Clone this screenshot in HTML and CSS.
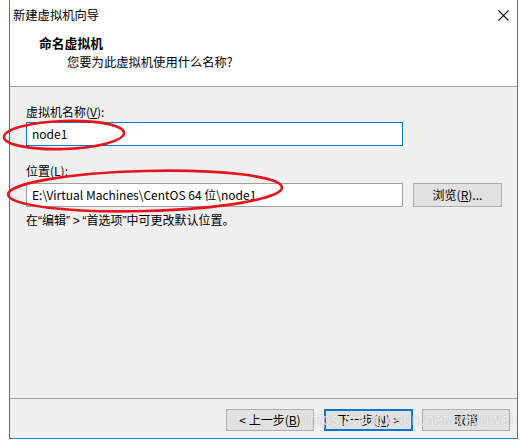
FILE: index.html
```html
<!DOCTYPE html>
<html lang="zh-CN">
<head>
<meta charset="utf-8">
<title>新建虚拟机向导</title>
<link rel="stylesheet" href="styles.css">
</head>
<body>
<div class="page">
  <div class="window">
    <div class="header">
      <div class="titlebar">
        <span class="title">新建虚拟机向导</span>
        <svg class="close" width="11" height="11" viewBox="0 0 11 11"><path d="M0.5 0.5 L10.5 10.5 M10.5 0.5 L0.5 10.5" stroke="#111" stroke-width="1.1" fill="none"/></svg>
      </div>
      <div class="heading">命名虚拟机</div>
      <div class="subheading">您要为此虚拟机使用什么名称?</div>
    </div>
    <div class="content">
      <div class="label label-name">虚拟机名称(<u>V</u>):</div>
      <div class="textbox focused">node1</div>
      <div class="label label-loc">位置(<u>L</u>):</div>
      <div class="row">
        <div class="textbox">E:\Virtual Machines\CentOS 64 位\node1</div>
        <div class="button browse">浏览(<u>R</u>)...</div>
      </div>
      <div class="note">在<span class="q">“</span>编辑<span class="q">”</span> <span class="q">&gt;</span> <span class="q">“</span>首选项<span class="q">”</span>中可更改默认位置。</div>
    </div>
    <div class="footer">
      <div class="button">&lt; 上一步(<u>B</u>)</div>
      <div class="button default">下一步(<u>N</u>) &gt;</div>
      <div class="button cancel">取消</div>
    </div>
  </div>
  <div class="watermark">https://blog.csdn.net/shiyuwei</div>
  <svg class="marks" width="522" height="441" viewBox="0 0 522 441">
    <ellipse cx="64" cy="135" rx="60" ry="14" transform="rotate(-2 64 135)" fill="none" stroke="#e8141c" stroke-width="2.6"/>
    <ellipse cx="145" cy="191" rx="137" ry="20" transform="rotate(-1.5 145 191)" fill="none" stroke="#e8141c" stroke-width="2.6"/>
  </svg>
</div>
</body>
</html>
```
FILE: styles.css
```css
html, body {
  margin: 0;
  padding: 0;
  background: #fff;
}
.page {
  position: relative;
  width: 522px;
  height: 441px;
  overflow: hidden;
  font-family: "Noto Sans CJK SC", "Microsoft YaHei", sans-serif;
  font-size: 12px;
  color: #000;
}
.window {
  margin-left: 9px;
  width: 507px;
  height: 438px;
  border: 1px solid #1883d7;
  border-top: 0;
  background: #f0f0f0;
  display: flex;
  flex-direction: column;
}
.header {
  background: #fff;
  height: 86px;
  border-bottom: 1px solid #a0a0a0;
}
.titlebar {
  height: 30px;
  display: flex;
  align-items: center;
  justify-content: space-between;
  padding-left: 3px;
  padding-right: 8px;
}
.title {
  line-height: 16px;
  font-size: 12.3px;
}
.close {
  display: block;
}
.heading {
  margin-top: 5px;
  padding-left: 29px;
  font-weight: bold;
  font-size: 12.8px;
  line-height: 16px;
}
.subheading {
  margin-top: 3px;
  padding-left: 57px;
  line-height: 16px;
  font-size: 12.3px;
}
.content {
  flex: 1;
  padding: 17px 0 0 16px;
}
.label {
  line-height: 16px;
}
.label-name {
  margin-bottom: 2px;
}
.label-loc {
  margin-top: 17px;
  margin-bottom: 4px;
}
.textbox {
  box-sizing: border-box;
  width: 377px;
  height: 24px;
  border: 1px solid #a0a0a0;
  background: #fff;
  padding-left: 5px;
  line-height: 22px;
  white-space: nowrap;
}
.textbox.focused {
  border-color: #0078d7;
}
.row {
  display: flex;
  gap: 10px;
}
.button {
  box-sizing: border-box;
  width: 88px;
  height: 22px;
  border: 1px solid #adadad;
  background: #e1e1e1;
  display: flex;
  align-items: center;
  justify-content: center;
  line-height: 16px;
}
.browse {
  width: 89px;
  height: 24px;
}
.note {
  margin-top: 5px;
  line-height: 16px;
}
.note .q {
  font-family: "Liberation Sans", Arial, sans-serif;
}
.footer {
  height: 40px;
  box-sizing: border-box;
  border-top: 1px solid #a0a0a0;
  padding: 10px 7px 0 0;
  display: flex;
  justify-content: flex-end;
  gap: 10px;
}
.footer .cancel {
  margin-left: -1px;
}
.button.default {
  width: 89px;
  border-color: #0078d7;
  box-shadow: inset 0 0 0 1px #0078d7;
}
.watermark {
  position: absolute;
  left: 304px;
  top: 410px;
  font-family: "Liberation Sans", Arial, sans-serif;
  font-size: 16px;
  line-height: 20px;
  color: rgba(255, 255, 255, 0.75);
  text-shadow: 0 0 1px rgba(120, 120, 120, 0.5);
  pointer-events: none;
}
.marks {
  position: absolute;
  left: 0;
  top: 0;
  pointer-events: none;
}
```
